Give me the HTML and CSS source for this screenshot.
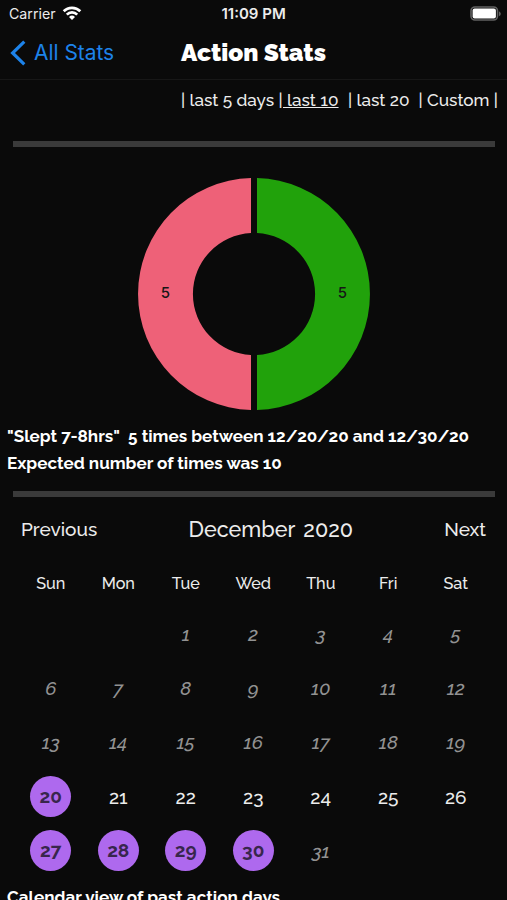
FILE: index.html
```html
<!DOCTYPE html>
<html lang="en">
<head>
<meta charset="utf-8">
<title>Action Stats</title>
<link rel="stylesheet" href="styles.css">
</head>
<body>
<div class="screen">
  <div class="status">
    <div class="carrier"><span>Carrier</span>
      <svg class="wifi" width="20" height="15" viewBox="0 0 20 15" fill="none" stroke="#fff" stroke-width="2.7">
        <path d="M1.7 5.3a11.6 11.6 0 0 1 16.6 0"/>
        <path d="M4.8 8.6a7.3 7.3 0 0 1 10.4 0"/>
        <path d="M10 14 7 11a4.3 4.3 0 0 1 6 0z" fill="#fff" stroke="none"/>
      </svg>
    </div>
    <div class="time">11:09 PM</div>
    <svg class="battery" width="32" height="16" viewBox="0 0 32 16">
      <rect x="1" y="1" width="26.5" height="13" rx="4" fill="none" stroke="#626262" stroke-width="1.6"/>
      <rect x="2.6" y="2.6" width="23.3" height="9.8" rx="2" fill="#fff"/>
      <path d="M29 5.3q1.8 1 1.8 2.5T29 10.3z" fill="#626262"/>
    </svg>
  </div>
  <div class="nav">
    <div class="back">
      <svg width="16" height="26" viewBox="0 0 16 26" fill="none" stroke="#1d83ea" stroke-width="3.2"><path d="M14.3 1.6 2.6 13l11.7 11.4"/></svg>
      <span>All Stats</span>
    </div>
    <h1>Action Stats</h1>
  </div>
  <div class="ranges"><span>| last 5 days</span><span class="on">| last 10</span><span class="r20">| last 20</span><span class="custom">| Custom |</span></div>
  <div class="rule"></div>
  <svg class="donut" width="234" height="234" viewBox="-117 -117 234 234">
    <path fill="#ee6178" d="M-3-115.96A116 116 0 0 0-3 115.96V60.93A61 61 0 0 1-3-60.93z"/>
    <path fill="#21a20b" d="M3-115.96A116 116 0 0 1 3 115.96V60.93A61 61 0 0 0 3-60.93z"/>
    <text x="-88.5" y="4.2">5</text>
    <text x="88.5" y="4.2">5</text>
  </svg>
  <div class="summary">
    <p>"Slept 7-8hrs"&nbsp; 5 times between 12/20/20 and 12/30/20</p>
    <p>Expected number of times was 10</p>
  </div>
  <div class="rule"></div>
  <div class="month"><span>Previous</span><span class="name">December <b>2020</b></span><span>Next</span></div>
  <div class="week days"><span>Sun</span><span>Mon</span><span>Tue</span><span>Wed</span><span>Thu</span><span>Fri</span><span>Sat</span></div>
  <div class="week off"><span></span><span></span><span>1</span><span>2</span><span>3</span><span>4</span><span>5</span></div>
  <div class="week off"><span>6</span><span>7</span><span>8</span><span>9</span><span>10</span><span>11</span><span>12</span></div>
  <div class="week off"><span>13</span><span>14</span><span>15</span><span>16</span><span>17</span><span>18</span><span>19</span></div>
  <div class="week"><span class="hit">20</span><span>21</span><span>22</span><span>23</span><span>24</span><span>25</span><span>26</span></div>
  <div class="week"><span class="hit">27</span><span class="hit">28</span><span class="hit">29</span><span class="hit">30</span><span class="none">31</span><span></span><span></span></div>
  <p class="caption">Calendar view of past action days</p>
</div>
</body>
</html>
```
FILE: styles.css
```css
* { box-sizing: border-box; }
body { margin: 0; background: #0a0a0a; }
.screen {
  width: 507px; height: 900px; overflow: hidden;
  display: flex; flex-direction: column;
  color: #ececec; background: #0a0a0a;
  font-family: Raleway, Lato, sans-serif; font-weight: 500;
  white-space: nowrap;
}
.screen > * { flex-shrink: 0; }
.status {
  height: 27px; padding: 0 5px 0 9px;
  display: grid; grid-template-columns: 212.5px 1fr auto; align-items: center;
  font: 400 14.2px/27px Inter, sans-serif;
}
.carrier { display: flex; align-items: center; gap: 6px; }
.time { font-weight: 600; font-size: 15px; }
.nav {
  height: 53px; padding: 0 0 0 10px; border-bottom: 1px solid #171717;
  display: grid; grid-template-columns: 171px 1fr; align-items: center;
}
.back { display: flex; align-items: center; gap: 8px; color: #1d83ea; font: 400 20.9px/50px Inter, sans-serif; }
h1 { margin: 0; font-size: 24.4px; line-height: 50px; font-weight: 900; color: #fff; }
.ranges { height: 61px; padding-left: 181px; display: flex; font-size: 17.2px; line-height: 41px; white-space: pre; }
.on { margin-left: 4.5px; text-decoration: underline; }
.r20 { margin-left: 9.5px; }
.custom { margin-left: 9px; }
.rule { height: 6px; margin: 0 12px 0 13px; background: #3a3a3a; }
.donut { margin: 30px 0 0 137px; }
.donut text { font: 500 15px Inter, sans-serif; fill: #161616; text-anchor: middle; }
.summary { height: 68px; margin-top: 12px; padding-left: 7px; }
.summary p, .caption { margin: 0; font-size: 17.08px; line-height: 26.5px; font-weight: 700; color: #fff; }
.month {
  height: 63px; padding: 0 21px;
  display: grid; grid-template-columns: 167.5px auto 1fr; font-size: 19px; line-height: 64px;
}
.month > :last-child { text-align: right; }
.name { font-size: 21.6px; line-height: 65px; }
.name b { font-weight: inherit; margin-left: 3px; }
.week {
  height: 54px; padding: 0 17.5px 0 17px;
  display: grid; grid-template-columns: repeat(7, 1fr); align-items: center; justify-items: center;
  font-size: 19px;
}
.days { height: 47.5px; font-size: 16.2px; }
.off { padding-bottom: 1px; }
.off, .none { font-style: italic; color: #929292; }
.hit {
  width: 41px; height: 41px; border-radius: 50%; line-height: 41px; text-align: center;
  background: #ae69ee; color: #38264d; font-weight: 700; font-size: 19px;
}
.caption { padding-left: 7px; margin-top: 6.5px; }
```
